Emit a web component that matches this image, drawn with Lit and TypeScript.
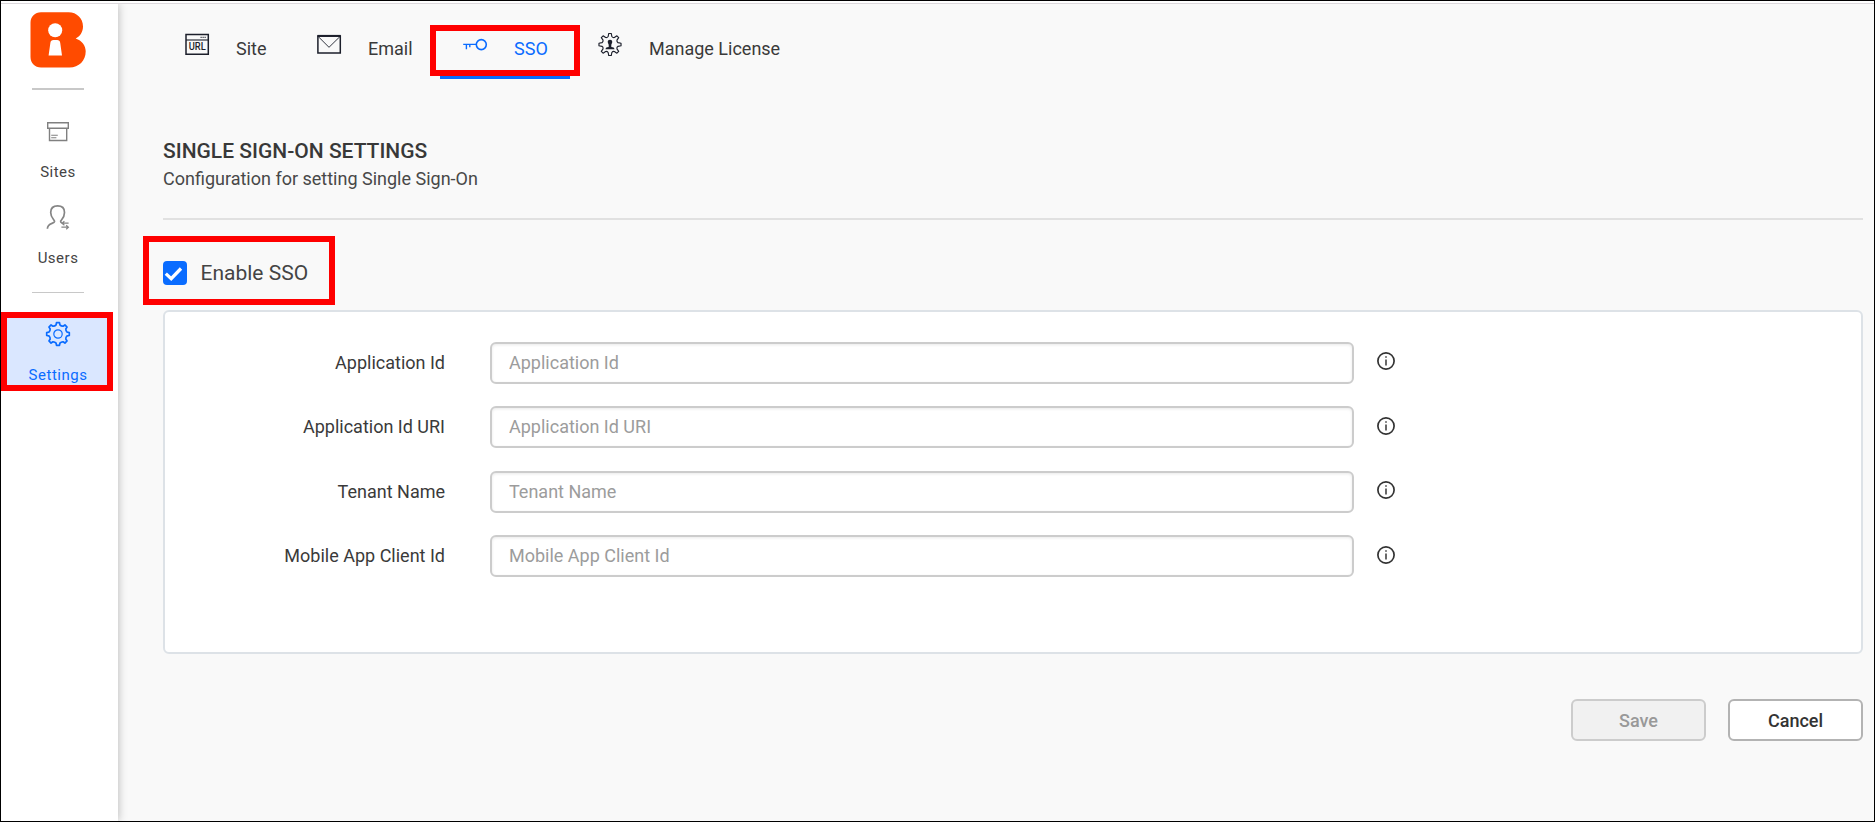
import { LitElement, html, css, svg } from "lit";
import { customElement, property } from "lit/decorators.js";

/* Outline of a toothed wheel, centred on (12,12). */
function gear(rOut: number, rIn: number, top: number, foot: number): string {
  const at = (r: number, deg: number) => {
    const a = (deg * Math.PI) / 180;
    return `${(12 + r * Math.sin(a)).toFixed(2)} ${(12 - r * Math.cos(a)).toFixed(2)}`;
  };
  let d = `M${at(rIn, -foot)}`;
  for (let i = 0; i < 8; i++) {
    const c = i * 45;
    d += `L${at(rOut, c - top)}L${at(rOut, c + top)}L${at(rIn, c + foot)}`;
    d += `Q${at(rIn - 1, c + 22.5)} ${at(rIn, c + 45 - foot)}`;
  }
  return d + "Z";
}

const icons: Record<string, unknown> = {
  sites: svg`<g fill="none" stroke="#808080" stroke-width="1.4">
    <path d="M1.7 2.7h20.600v5.600H1.700zM3.500 8.300v12.200h17.200V8.300"/>
    <path d="M5.200 15.200h6.600M5.200 17.700h5.200" stroke-width="1.1"/></g>`,
  users: svg`<g fill="none" stroke="#858585" stroke-width="1.7">
    <path d="M1.400 23.800C1.600 17.200 8.300 19.300 8.600 16.400 8.700 14.800 4.700 13 4.700 7.400 4.700 3.200 7.500 .9 11.600 .9s6.900 2.300 6.900 6.500c0 5.400-3.200 7.400-3.900 8.800-.1 1 .4 1.500 1.200 1.900"/>
    <path d="M22.600 18.200h-6.600m2.400-2-2.400 2 2.400 2M15.400 22.200h7m-2.200-2 2.200 2-2.200 2" stroke-width="1.2"/></g>`,
  settings: svg`<g fill="none" stroke="#0a6cff"><path d="${gear(11.4, 9.3, 7.5, 12)}" stroke-width="1.7" stroke-linejoin="round"/>
    <circle cx="12" cy="12" r="4.2" stroke-width="1.2"/></g>`,
  site: svg`<g fill="none" stroke="#1c1f2b"><path d="M1 2.500h22.300v19.700H1z" stroke-width="1.5"/>
    <path d="M1 8h22.300" stroke-width="1.1"/><path d="M15.500 5.300h6" stroke-width="1" stroke-dasharray="1.3 .7"/></g>
    <text class="url" x="12.200" y="18.200" text-anchor="middle" textLength="17" lengthAdjust="spacingAndGlyphs">URL</text>`,
  email: svg`<g fill="none" stroke="#1c1f2b"><path d="M.9 3.900h22.400v17.200H.9z" stroke-width="1.5"/>
    <path d="M.5 3.900h23.200" stroke-width="2"/><path d="M1.200 4.500 12 15.300 23 4.500" stroke-width=".9"/></g>`,
  sso: svg`<g fill="none" stroke="#0a6cff"><circle cx="18.300" cy="12.600" r="5" stroke-width="1.6"/>
    <path d="M13.300 12.400H.2M3.400 12.400v4.800M6.800 12.400v2.900" stroke-width="1.4"/></g>`,
  license: svg`<g transform="translate(0 .5)"><path d="${gear(11.1, 8.2, 6.5, 13)}" fill="none" stroke="#1c1f2b" stroke-width="1.15" stroke-linejoin="round"/>
    <path d="M12 7.200c1.800 0 2.400 1.200 2.200 2.600-.1 1.100-.7 1.700-.9 2.500v2.200c2 .1 3 .7 3.200 2.200h-9c.2-1.500 1.200-2.100 3.200-2.200v-2.200c-.2-.8-.8-1.400-.9-2.500-.2-1.400.4-2.600 2.200-2.600z" fill="#1c1f2b"/></g>`,
  info: svg`<circle cx="12" cy="12" r="8.1" fill="none" stroke="#333" stroke-width="1.7"/>
    <path d="M12 10.600v6M12 7.300v1.400" stroke="#444" stroke-width="1.6"/>`,
};

@customElement("ui-icon")
class UiIcon extends LitElement {
  @property() name = "";
  static styles = css`
    :host { display: block; width: 24px; height: 24px; flex: none; }
    svg { display: block; overflow: visible; }
    .url { font: 500 10px Roboto, sans-serif; fill: #1c1f2b; }
  `;
  render() {
    return html`<svg width="24" height="24" viewBox="0 0 24 24">${icons[this.name]}</svg>`;
  }
}

@customElement("side-nav")
class SideNav extends LitElement {
  static styles = css`
    :host { display: flex; flex-direction: column; align-items: center; width: 117px; background: #fff;
      box-shadow: 0 0 9px rgba(0, 0, 0, .28); box-sizing: border-box; padding: 8px 3px 0 0; z-index: 1;
      clip-path: inset(0 -14px 0 0); }
    .logo { display: block; width: 56px; height: 56px; }
    .line { width: 52px; background: #c8c8c8; }
    .line.top { height: 2px; margin: 20px 0 30px; }
    .line.low { height: 1px; margin: 23px 0 19px; }
    .item { display: flex; flex-direction: column; align-items: center; font-size: 15px; line-height: 18px;
      letter-spacing: .5px; color: #444; height: 85px; }
    .item ui-icon { margin-bottom: 19px; }
    .item.users { height: 64px; }
    .item.users ui-icon { margin-bottom: 20px; }
    .item.active { position: relative; align-self: stretch; margin-right: 2px; height: 79px;
      box-sizing: border-box; padding: 10px 0 0 2px; color: #0a6cff; background: #dae7ff; }
    .item.active ui-icon { margin-bottom: 20px; }
    .mark { position: absolute; inset: 0; border: 6px solid #f00; }
  `;
  render() {
    return html`
      <svg class="logo" viewBox="0 0 56 56">
        <path d="M11 .3h27.500C47 .3 53 6.600 53 14.400c0 5.400-2.900 9.800-7.300 12 6.200 2 10 7 10 12.900C55.700 48.800 49 55.500 39.500 55.500H11C5 55.500.500 51 .500 45V10.800C.500 4.800 5 .3 11 .3z" fill="#ff4b00"/>
        <circle cx="25.200" cy="18.200" r="7" fill="#fff"/>
        <path d="M23.500 28h3.600c1.800 0 2.900 1 3.100 2.800L32 43.500H18.600L20.400 30.800C20.600 29 21.700 28 23.500 28z" fill="#fff"/>
      </svg>
      <div class="line top"></div>
      <div class="item"><ui-icon name="sites"></ui-icon><span class="label">Sites</span></div>
      <div class="item users"><ui-icon name="users"></ui-icon><span class="label">Users</span></div>
      <div class="line low"></div>
      <div class="item active"><ui-icon name="settings"></ui-icon><span class="label">Settings</span>
        <div class="mark"></div></div>
    `;
  }
}

@customElement("sso-form")
class SsoForm extends LitElement {
  static styles = css`
    :host { display: block; box-sizing: border-box; height: 344px; border: 2px solid #dde2e7;
      border-radius: 6px; background: #fff; padding-top: 29.750px; }
    .row { display: flex; align-items: center; height: 42px; margin-bottom: 22.400px; }
    .label { width: 280px; text-align: right; margin-right: 45px; line-height: 20px; font-size: 18px; color: #3a3a3a; }
    input { box-sizing: border-box; width: 864px; height: 42px; border: 2px solid #ccc; border-radius: 6px;
      padding: 0 17px 1px; font: 18px Roboto, sans-serif; background: #fff; outline: 0;
      box-shadow: inset 0 1px 3px rgba(0, 0, 0, .09); }
    input::placeholder { color: #9c9c9c; opacity: 1; }
    ui-icon { margin: -2.800px 0 0 20px; }
  `;
  render() {
    return ["Application Id", "Application Id URI", "Tenant Name", "Mobile App Client Id"].map(
      (t) => html`<div class="row"><label class="label">${t}</label><input placeholder=${t} aria-label=${t} />
        <ui-icon name="info"></ui-icon></div>`
    );
  }
}

@customElement("app-root")
class AppRoot extends LitElement {
  static styles = css`
    :host { display: flex; flex-direction: column; box-sizing: border-box; width: 1875px; height: 822px;
      border: 1px solid #000; font-family: Roboto, sans-serif; overflow: hidden; background: #f9f9f9; }
    .strip { flex: none; height: 3px; box-sizing: border-box; background: #fff; border-bottom: 1px solid #dcd8dc; }
    .body { display: flex; flex: 1; }
    main { flex: 1; padding: 0 11px 0 45px; }
    nav { display: flex; height: 75px; margin-bottom: 59px; color: #3a3a3a; font-size: 18px; }
    .tab { position: relative; display: flex; box-sizing: border-box; height: 75px; line-height: 21px;
      border-bottom: 4px solid transparent; }
    .tab ui-icon { margin-top: 28px; }
    .tab .label { margin-top: 34px; }
    .tab.site { padding-left: 22px; width: 154px; }
    .tab.site .label, .tab.email .label { margin-left: 27px; }
    .tab.email { width: 123px; }
    .tab.sso { width: 130px; padding-left: 23px; color: #0a6cff; border-color: #0a6cff; }
    .tab.sso .label { margin-left: 27px; }
    .tab.license { padding-left: 28px; }
    .tab.license .label { margin-left: 27px; }
    .mark { position: absolute; border: 6px solid #f00; box-sizing: border-box; }
    .tab .mark { left: -10px; top: 21px; width: 150px; height: 51px; }
    h1 { margin: 0; font-size: 21px; font-weight: 500; line-height: 26px; color: #383838; }
    .sub { margin: 0; font-size: 18px; line-height: 24px; padding-top: 3px; color: #484848; }
    .rule { height: 2px; margin: 27px 0 0; background: #e1e1e1; }
    .enable { position: relative; display: flex; align-items: center; height: 90px; box-sizing: border-box;
      padding-top: 16px; font-size: 21px; color: #444; }
    .box { display: block; width: 24px; height: 24px; margin-right: 13.500px; }
    .enable .mark { left: -20px; top: 16px; width: 192px; height: 69px; }
    footer { display: flex; justify-content: flex-end; gap: 22px; padding-top: 45px; }
    button { box-sizing: border-box; width: 135px; height: 42px; border: 2px solid #b3b3b3; border-radius: 6px;
      background: #fff; font: 500 18px Roboto, sans-serif; color: #333; padding: 0; }
    button.off { background: #f1f1f1; border-color: #ccc; color: #999; }
  `;
  render() {
    return html`
      <div class="strip"></div>
      <div class="body">
        <side-nav></side-nav>
        <main>
          <nav>
            <div class="tab site"><ui-icon name="site"></ui-icon><span class="label">Site</span></div>
            <div class="tab email"><ui-icon name="email"></ui-icon><span class="label">Email</span></div>
            <div class="tab sso"><ui-icon name="sso"></ui-icon><span class="label">SSO</span><div class="mark"></div></div>
            <div class="tab license"><ui-icon name="license"></ui-icon><span class="label">Manage License</span></div>
          </nav>
          <h1>SINGLE SIGN-ON SETTINGS</h1>
          <p class="sub">Configuration for setting Single Sign-On</p>
          <div class="rule"></div>
          <div class="enable">
            <svg class="box" viewBox="0 0 24 24"><rect width="24" height="24" rx="4" fill="#0a6cff"/>
              <path d="M2.800 12.600 8.200 17.600 18 7.500" fill="none" stroke="#fff" stroke-width="3.300"/></svg>
            <span>Enable SSO</span><div class="mark"></div>
          </div>
          <sso-form></sso-form>
          <footer><button class="off">Save</button><button>Cancel</button></footer>
        </main>
      </div>
    `;
  }
}
